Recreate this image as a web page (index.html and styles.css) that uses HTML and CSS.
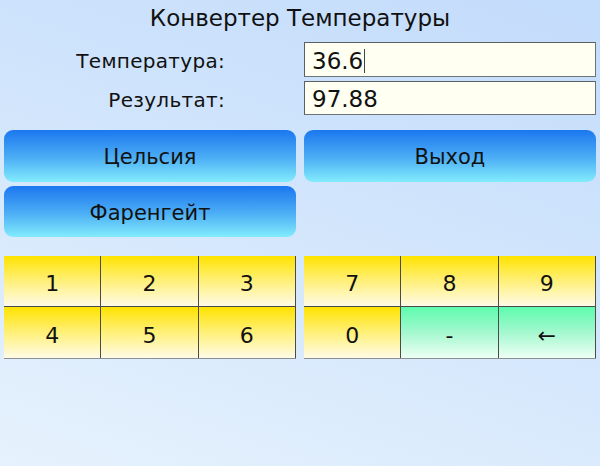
FILE: index.html
```html
<!DOCTYPE html>
<html lang="ru">
<head>
<meta charset="utf-8">
<title>Конвертер Температуры</title>
<link rel="stylesheet" href="styles.css">
</head>
<body>
<div class="app">
  <h1 class="title">Конвертер Температуры</h1>
  <div class="form">
    <div class="lbl">Температура:</div>
    <div class="field">36.6<span class="caret"></span></div>
    <div class="lbl">Результат:</div>
    <div class="field">97.88</div>
  </div>
  <div class="buttons">
    <div class="btn">Цельсия</div>
    <div class="btn">Выход</div>
    <div class="btn">Фаренгейт</div>
  </div>
  <div class="keypad">
    <div class="pad">
      <div class="key">1</div><div class="key">2</div><div class="key">3</div>
      <div class="key">4</div><div class="key">5</div><div class="key">6</div>
    </div>
    <div class="pad">
      <div class="key">7</div><div class="key">8</div><div class="key">9</div>
      <div class="key">0</div><div class="key green">-</div><div class="key green">←</div>
    </div>
  </div>
</div>
</body>
</html>
```
FILE: styles.css
```css
html, body {
  margin: 0;
  padding: 0;
}
body {
  width: 600px;
  height: 466px;
  overflow: hidden;
  background: linear-gradient(200deg, #c3dcfb 0%, #d3e6fc 50%, #e6f2fd 100%);
  font-family: "DejaVu Sans", "Liberation Sans", sans-serif;
  color: #111;
}
.app {
  padding: 0 4px;
}
.title {
  margin: 0;
  height: 42px;
  line-height: 36px;
  font-size: 23px;
  font-weight: normal;
  text-align: center;
}
.form {
  display: grid;
  grid-template-columns: 292px 292px;
  grid-template-rows: 35px 34px;
  column-gap: 8px;
  row-gap: 4px;
}
.lbl {
  text-align: right;
  padding-right: 71px;
  font-size: 20px;
  line-height: 39px;
  letter-spacing: 0.3px;
}
.field {
  background: #fffff2;
  border: 1px solid #6d7378;
  border-top-color: #5a5f64;
  border-left-color: #5a5f64;
  font-size: 23px;
  line-height: 32px;
  padding-left: 7px;
  padding-top: 2px;
  display: flex;
  align-items: center;
}
.caret {
  display: inline-block;
  width: 1px;
  height: 24px;
  background: #444;
  margin-left: 1px;
}
.buttons {
  margin-top: 15px;
  display: grid;
  grid-template-columns: 292px 292px;
  grid-template-rows: 52px 51px;
  column-gap: 8px;
  row-gap: 4px;
}
.btn {
  border-radius: 9px;
  background: linear-gradient(180deg, #1b77ef 0%, #4eb0f5 55%, #82ecfc 100%);
  display: flex;
  align-items: center;
  justify-content: center;
  font-size: 21px;
  padding-top: 2px;
  box-sizing: border-box;
}
.keypad {
  margin-top: 19px;
  display: grid;
  grid-template-columns: 292px 292px;
  column-gap: 8px;
}
.pad {
  display: grid;
  grid-template-columns: 1fr 1fr 1fr;
  grid-template-rows: 51px 51px;
  border-bottom: 1px solid #8a8f94;
}
.key {
  background: linear-gradient(180deg, #ffe300 0%, #fff07a 50%, #fffbe6 100%);
  border-right: 1px solid #4a4a4a;
  border-bottom: 1px solid #4a4a4a;
  display: flex;
  align-items: center;
  justify-content: center;
  font-size: 22px;
  padding-top: 5px;
  box-sizing: border-box;
}
.key:nth-child(n+4) {
  border-bottom: none;
}
.key.green {
  background: linear-gradient(180deg, #5efbae 0%, #a4f8cf 50%, #edfff5 100%);
}
```
